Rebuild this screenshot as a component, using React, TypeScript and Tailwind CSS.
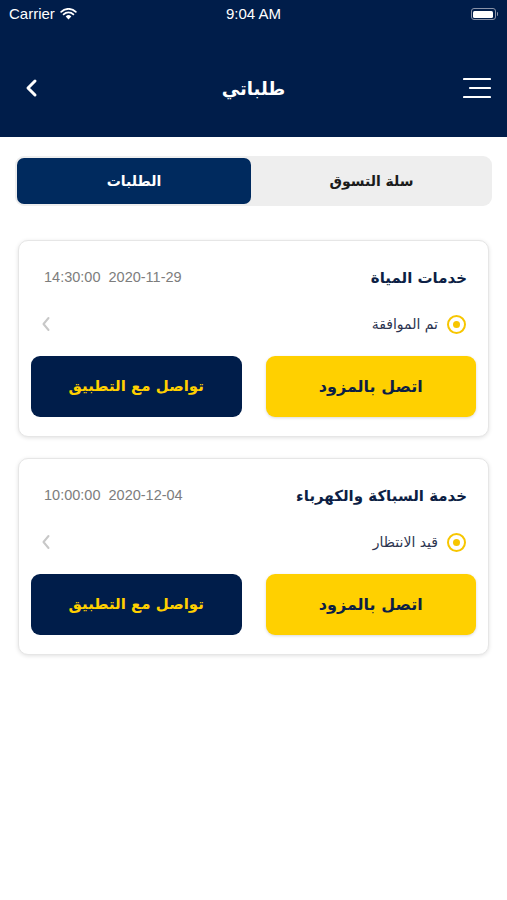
import React from "react";

const AR = { fontFamily: '"DejaVu Sans", "Noto Sans", sans-serif' };
const LAT = { fontFamily: '"Helvetica Neue", "Liberation Sans", Arial, sans-serif' };

function Card({ title, date, status }: { title: string; date: string; status: string }) {
  return (
    <div className="rounded-[10px] border border-[#e6e6e6] bg-white shadow-[0_1px_4px_rgba(0,0,0,0.12)] px-3 pt-[22px] pb-[19px]" dir="rtl">
      <div className="flex items-center justify-between pr-[9px] pl-[13px] h-[30px]">
        <span className="text-[15px] font-bold text-[#0d1f45]" style={AR}>{title}</span>
        <span dir="ltr" className="whitespace-pre text-[14.5px] text-[#7d7d7d]" style={LAT}>{date}</span>
      </div>
      <div className="flex items-center justify-between pr-[10px] pl-[10px] mt-[19px] h-[24px]">
        <div className="flex items-center gap-[9px]">
          <span className="flex items-center justify-center w-[19px] h-[19px] rounded-full border-[2px] border-[#f7c600]">
            <span className="w-[7px] h-[7px] rounded-full bg-[#f7c600]" />
          </span>
          <span className="text-[14px] text-[#2b3450]" style={AR}>{status}</span>
        </div>
        <svg width="10" height="16" viewBox="0 0 10 16" fill="none">
          <path d="M7.5 2 L2.5 8 L7.5 14" stroke="#c8c8c8" strokeWidth="2" strokeLinecap="round" strokeLinejoin="round" />
        </svg>
      </div>
      <div className="flex gap-[24px] mt-[20px]">
        <button className="flex-1 h-[61px] rounded-[9px] bg-[#ffd000] shadow-[0_1px_3px_rgba(0,0,0,0.15)] text-[16px] font-bold text-[#0d1f45]" style={AR}>اتصل بالمزود</button>
        <button className="flex-1 h-[61px] rounded-[9px] bg-[#001d4a] text-[15px] font-bold text-[#ffd000]" style={AR}>تواصل مع التطبيق</button>
      </div>
    </div>
  );
}

export default function App() {
  return (
    <div className="w-[507px] h-[900px] bg-white overflow-hidden">
      <div className="bg-[#001d4a] h-[137px] text-white">
        <div className="relative h-[28px] flex items-center justify-between px-[9px]" style={LAT}>
          <div className="flex items-center gap-[5px]">
            <span className="text-[15px]">Carrier</span>
            <svg width="17" height="12" viewBox="0 0 17 12">
              <path d="M8.5 11.5 L5.7 8.4 A4 4 0 0 1 11.3 8.4 Z" fill="white" />
              <path d="M3.6 6.3 A7 7 0 0 1 13.4 6.3" stroke="white" strokeWidth="1.8" fill="none" strokeLinecap="round" />
              <path d="M1.2 3.8 A10.5 10.5 0 0 1 15.8 3.8" stroke="white" strokeWidth="1.8" fill="none" strokeLinecap="round" />
            </svg>
          </div>
          <span className="absolute left-1/2 -translate-x-1/2 text-[15px] font-medium">9:04 AM</span>
          <div className="flex items-center">
            <div className="w-[25px] h-[12px] rounded-[3px] border border-[#8a93a8] p-[1.5px]">
              <div className="w-full h-full rounded-[1.5px] bg-white" />
            </div>
            <div className="w-[1.5px] h-[4px] bg-[#8a93a8] ml-[1px] rounded-r" />
          </div>
        </div>
        <div className="relative flex items-center justify-between h-[62px] mt-[29px] pl-[24px] pr-[16px]">
          <svg width="16" height="20" viewBox="0 0 16 20" fill="none">
            <path d="M11 3 L4 10 L11 17" stroke="white" strokeWidth="3" strokeLinecap="round" strokeLinejoin="round" />
          </svg>
          <span className="absolute left-1/2 -translate-x-1/2 text-[18px] font-semibold" style={AR}>طلباتي</span>
          <svg width="28" height="22" viewBox="0 0 28 22" fill="none">
            <path d="M1 2 H27 M7 11 H27 M1 20 H27" stroke="white" strokeWidth="2.2" strokeLinecap="round" />
          </svg>
        </div>
      </div>

      <div className="px-[15px] pt-[19px]">
        <div className="flex h-[50px] rounded-[9px] bg-[#eeeeee] p-[2px] pr-0" dir="ltr">
          <div className="w-[234px] h-[46px] rounded-[7px] bg-[#002a5e] flex items-center justify-center text-white text-[14px] font-bold" style={AR}>الطلبات</div>
          <div className="flex-1 flex items-center justify-center text-[#1b1b1b] text-[14px] font-bold" style={AR}>سلة التسوق</div>
        </div>
      </div>

      <div className="px-[18px] pt-[34px] flex flex-col gap-[21px]">
        <Card title="خدمات المياة" date={"14:30:00  2020-11-29"} status="تم الموافقة" />
        <Card title="خدمة السباكة والكهرباء" date={"10:00:00  2020-12-04"} status="قيد الانتظار" />
      </div>
    </div>
  );
}
